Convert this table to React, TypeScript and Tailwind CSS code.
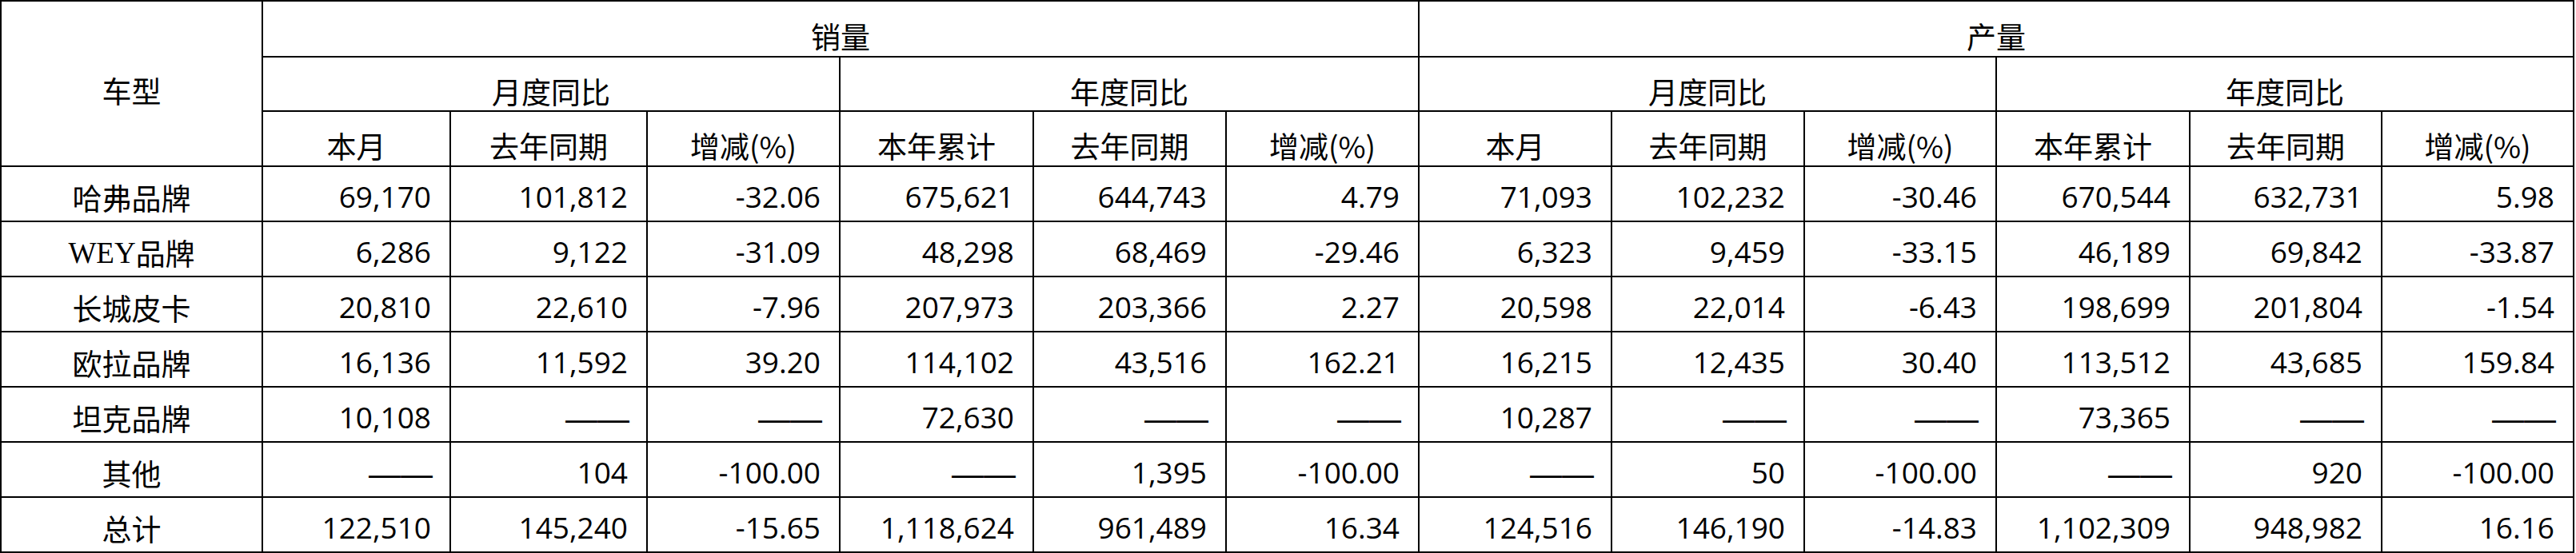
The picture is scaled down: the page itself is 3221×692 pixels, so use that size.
import React from "react";

const CJK = "font-['Noto_Sans_CJK_SC',sans-serif]";
const NUM = "font-['Open_Sans',sans-serif]";

type Row = { label: React.ReactNode; values: string[] };

const rows: Row[] = [
  { label: "哈弗品牌", values: ["69,170", "101,812", "-32.06", "675,621", "644,743", "4.79", "71,093", "102,232", "-30.46", "670,544", "632,731", "5.98"] },
  { label: (<><span className="font-['Liberation_Serif',serif]">WEY</span>品牌</>), values: ["6,286", "9,122", "-31.09", "48,298", "68,469", "-29.46", "6,323", "9,459", "-33.15", "46,189", "69,842", "-33.87"] },
  { label: "长城皮卡", values: ["20,810", "22,610", "-7.96", "207,973", "203,366", "2.27", "20,598", "22,014", "-6.43", "198,699", "201,804", "-1.54"] },
  { label: "欧拉品牌", values: ["16,136", "11,592", "39.20", "114,102", "43,516", "162.21", "16,215", "12,435", "30.40", "113,512", "43,685", "159.84"] },
  { label: "坦克品牌", values: ["10,108", "——", "——", "72,630", "——", "——", "10,287", "——", "——", "73,365", "——", "——"] },
  { label: "其他", values: ["——", "104", "-100.00", "——", "1,395", "-100.00", "——", "50", "-100.00", "——", "920", "-100.00"] },
  { label: "总计", values: ["122,510", "145,240", "-15.65", "1,118,624", "961,489", "16.34", "124,516", "146,190", "-14.83", "1,102,309", "948,982", "16.16"] },
];

const sub = ["本月", "去年同期", "增减(%)", "本年累计", "去年同期", "增减(%)", "本月", "去年同期", "增减(%)", "本年累计", "去年同期", "增减(%)"];

function Head({ children, className = "" }: { children: React.ReactNode; className?: string }) {
  return (
    <div className={`bg-white flex items-center justify-center pt-[18px] text-[37px] leading-none text-black ${CJK} ${className}`}>
      {children}
    </div>
  );
}

function Cell({ v }: { v: string }) {
  if (v === "——") {
    return (
      <div className="bg-white flex items-center justify-end pr-[21px] pt-[10px]">
        <span className="font-['Liberation_Sans',sans-serif] text-[40px] leading-none text-black">——</span>
      </div>
    );
  }
  return (
    <div className={`bg-white flex items-center justify-end pr-[23px] pt-[6px] text-[37px] leading-none text-black ${NUM}`}>
      {v}
    </div>
  );
}

export default function App() {
  return (
    <div className="w-[3221px] h-[692px] bg-white">
      <div
        lang="zh-CN"
        className="grid w-[3219px] bg-black p-[2px] gap-[2px] grid-cols-[325px_233px_244px_239px_240px_239px_239px_239px_239px_238px_240px_238px_238px] grid-rows-[68px_66px_67px_67px_67px_67px_67px_67px_67px_67px]"
      >
        <Head className="row-span-3">车型</Head>
        <Head className="col-span-6">销量</Head>
        <Head className="col-span-6">产量</Head>
        <Head className="col-span-3">月度同比</Head>
        <Head className="col-span-3">年度同比</Head>
        <Head className="col-span-3">月度同比</Head>
        <Head className="col-span-3">年度同比</Head>
        {sub.map((s, i) => (
          <Head key={i}>{s}</Head>
        ))}
        {rows.map((r, ri) => (
          <React.Fragment key={ri}>
            <div className={`bg-white flex items-center justify-center pt-[10px] text-[37px] leading-none text-black ${CJK}`}>
              {r.label}
            </div>
            {r.values.map((v, vi) => (
              <Cell key={vi} v={v} />
            ))}
          </React.Fragment>
        ))}
      </div>
    </div>
  );
}
